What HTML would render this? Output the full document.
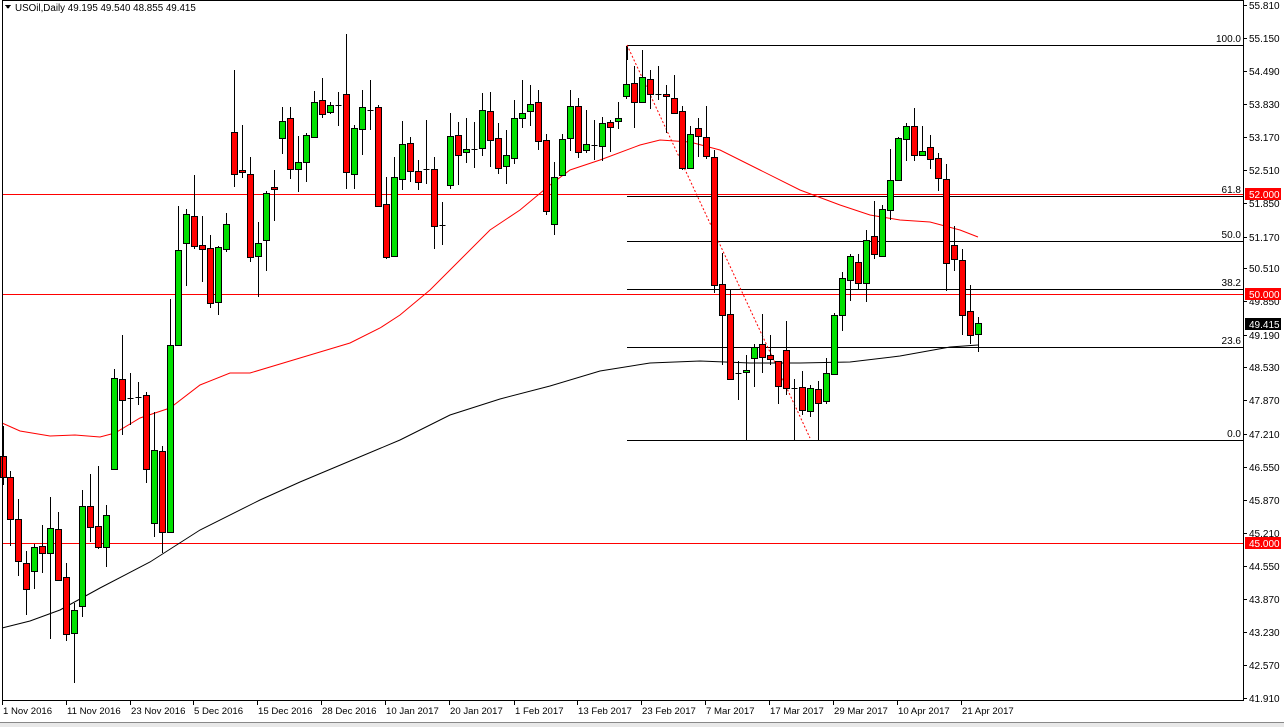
<!DOCTYPE html>
<html><head><meta charset="utf-8"><style>
html,body{margin:0;padding:0;background:#fff;width:1284px;height:727px;overflow:hidden}
svg{display:block;font-family:"Liberation Sans","DejaVu Sans",sans-serif}
</style></head><body>
<svg id="s" width="1284" height="727" xmlns="http://www.w3.org/2000/svg" shape-rendering="crispEdges">
<rect x="0" y="0" width="1284" height="727" fill="#fff"/>
<g id="g"></g>
</svg>
<script>
var NS="http://www.w3.org/2000/svg",G=document.getElementById('g');
function el(t,a,txt){var e=document.createElementNS(NS,t);for(var k in a)e.setAttribute(k,a[k]);if(txt!=null)e.textContent=txt;G.appendChild(e);return e;}
function line(x1,y1,x2,y2,c,w,extra){var a={x1:x1,y1:y1,x2:x2,y2:y2,stroke:c,'stroke-width':w||1};for(var k in extra)a[k]=extra[k];return el('line',a);}
[194.5,294.5,543.5].forEach(function(y){line(2,y,1243,y,'#f00',1);});
var fib=[[45,'100.0'],[196,'61.8'],[241,'50.0'],[289,'38.2'],[347,'23.6'],[440,'0.0']];
fib.forEach(function(f){line(627,f[0]+.5,1243,f[0]+.5,'#000',1);el('text',{x:1241,y:f[0]-3,'font-size':10,'text-anchor':'end',fill:'#000'},f[1]);});
line(627.5,45,627.5,60,'#000',1);
line(627,45,810,438,'#f00',1,{'stroke-dasharray':'2,2','shape-rendering':'auto'});
function poly(pts,c){el('polyline',{points:pts.map(function(p){return p.join(',')}).join(' '),fill:'none',stroke:c,'stroke-width':1,'shape-rendering':'auto'});}
poly([[2,423],[20,431],[50,436],[75,435],[100,437],[115,433],[140,418],[170,408],[200,385],[230,373],[250,373],[300,358],[350,343],[380,328],[400,315],[430,290],[460,260],[490,230],[520,210],[550,185],[570,170],[600,160],[640,145],[660,140],[690,142],[720,150],[760,170],[800,190],[840,205],[870,215],[900,220],[930,222],[960,230],[978,237]],'#f00');
poly([[2,628],[30,621],[60,610],[100,588],[150,562],[200,530],[260,500],[300,482],[350,461],[400,440],[450,415],[500,399],[550,386],[600,371],[650,363],[700,361],[750,363],[800,363],[850,362],[900,356],[950,347],[978,345]],'#000');
var P1=[[8,1012,1062,940,1080,'r'],[30,1062,1162,1048,1225,'r'],[55,1162,1262,1113,1296,'r'],[79,1265,1328,1238,1390,'r'],[103,1228,1286,1220,1327,'g'],[127,1226,1241,1176,1290,'r'],[151,1182,1243,1108,1447,'g'],[175,1184,1306,1145,1306,'r'],[199,1298,1435,1267,1452,'r'],[223,1377,1433,1360,1552,'g'],[247,1131,1368,1093,1393,'g'],[271,1131,1181,1054,1215,'r'],[295,1178,1228,1036,1232,'r'],[319,1153,1228,1128,1275,'g'],[343,827,1042,805,1046,'g'],[367,830,878,725,963,'r'],[391,875,875,815,937,'d'],[415,872,872,835,890,'d'],[439,867,1043,860,1077,'r'],[463,998,1171,908,1203,'g'],[487,1000,1193,988,1242,'r'],[511,748,1193,640,1193,'g'],[535,523,748,418,748,'g'],[559,437,505,425,609,'g'],[583,442,514,344,519,'r'],[607,511,520,441,598,'r'],[631,518,649,487,661,'r'],[655,516,647,513,676,'g'],[679,461,520,434,528,'g'],[703,242,342,96,372,'r'],[727,333,338,226,352,'r'],[751,342,540,302,550,'r'],[775,505,537,457,635,'g'],[799,387,499,382,572,'g'],[823,373,378,333,453,'r'],[847,216,257,182,294,'g'],[871,209,331,182,355,'r'],[895,314,331,251,384,'g'],[919,249,314,245,361,'g'],[943,171,255,145,255,'g'],[967,167,200,113,210,'r'],[991,177,195,170,200,'g']];
var P2=[[25,177,177,147,227,'d'],[49,153,338,10,377,'r'],[73,233,341,225,377,'g'],[97,183,236,143,298,'g'],[121,191,191,119,237,'d'],[145,183,419,178,421,'r'],[169,413,540,350,545,'r'],[193,350,537,302,540,'g'],[217,271,354,215,380,'g'],[241,268,335,254,360,'r'],[265,334,361,309,379,'r'],[289,330,330,213,365,'d'],[313,330,466,301,521,'r'],[337,463,463,409,510,'d'],[361,252,367,197,377,'g'],[385,249,296,218,367,'r'],[409,283,290,209,316,'g'],[433,282,282,218,327,'d'],[457,190,281,150,300,'g'],[481,192,262,147,325,'r'],[505,257,328,222,343,'r'],[529,297,323,237,365,'g'],[553,209,304,166,318,'g'],[577,197,209,119,232,'g'],[601,176,193,130,228,'g'],[625,171,264,143,286,'r'],[649,261,431,247,439,'r'],[673,348,461,313,486,'g'],[697,259,345,248,345,'g'],[721,181,257,143,287,'g'],[745,181,290,162,303,'r'],[769,271,286,189,291,'g'],[793,274,274,213,309,'d'],[817,221,276,207,312,'g'],[841,219,231,213,290,'r'],[865,209,217,171,235,'g'],[889,128,157,37,164,'g'],[913,126,170,86,232,'r'],[937,112,170,47,172,'g'],[961,117,152,96,187,'r'],[985,152,152,85,166,'d']];
var P3=[[19,153,157,130,245,'r'],[43,162,198,107,200,'r'],[67,192,328,181,333,'r'],[91,247,327,228,329,'g'],[115,233,252,209,302,'r'],[139,255,300,181,307,'r'],[163,302,606,286,625,'r'],[187,604,676,530,795,'r'],[211,675,828,617,831,'r'],[235,815,815,785,878,'d'],[259,808,813,772,975,'g'],[283,753,780,745,847,'g'],[307,746,777,675,815,'r'],[331,772,782,725,795,'r'],[355,787,845,785,888,'r'],[379,760,850,690,867,'r'],[403,850,850,829,975,'d'],[427,849,903,810,915,'r'],[451,851,906,843,920,'g'],[475,853,887,833,975,'r'],[499,814,880,779,888,'g'],[523,676,818,671,820,'g'],[547,589,678,575,716,'g'],[571,537,593,531,643,'g'],[595,550,602,532,614,'r'],[619,499,601,475,645,'g'],[643,490,533,406,543,'r'],[667,425,536,415,537,'g'],[691,356,428,283,451,'g'],[715,257,357,253,357,'g'],[739,227,259,221,310,'g'],[763,228,298,185,310,'r'],[787,288,296,228,296,'g'],[811,278,307,249,330,'r'],[835,304,352,292,382,'r'],[859,354,554,318,619,'r'],[883,511,545,465,572,'r'],[907,547,677,520,725,'r'],[931,668,725,606,745,'r'],[955,696,723,682,765,'g']];
function Y(z){return Math.round(30+z/2.375);}
function draw(P,off){P.forEach(function(c){var x=Math.round(off+c[0]/3)+0.5;var t=Y(c[1]),b=Y(c[2]),h=Y(c[3]),l=Y(c[4]);
line(x,h,x,l,'#000',1);
if(c[5]=='d'||b-t<1){line(x-3,t+.5,x+3,t+.5,'#000',1);}
else el('rect',{x:x-3,y:t+.5,width:6,height:b-t,fill:c[5]=='g'?'#00e000':'#f00',stroke:'#000','stroke-width':1});});}
draw(P1,0);draw(P2,330);draw(P3,660);
el('rect',{x:2.5,y:0.5,width:1241,height:700,fill:'none',stroke:'#000','stroke-width':1});
var pl=[[5,'55.810'],[38,'55.150'],[71,'54.490'],[104,'53.830'],[137,'53.170'],[170,'52.510'],[203,'51.850'],[237,'51.170'],[268,'50.510'],[301,'49.850'],[335,'49.190'],[367,'48.530'],[400,'47.870'],[434,'47.210'],[467,'46.550'],[500,'45.870'],[533,'45.210'],[566,'44.550'],[599,'43.870'],[632,'43.230'],[665,'42.570'],[698,'41.910']];
pl.forEach(function(p){line(1243,p[0]+.5,1247,p[0]+.5,'#000',1);el('text',{x:1249,y:p[0]+4,'font-size':10,fill:'#000'},p[1]);});
[[194,'52.000','#f00','#fff'],[294,'50.000','#f00','#fff'],[543,'45.000','#f00','#fff'],[324,'49.415','#000','#fff']].forEach(function(b){el('rect',{x:1245,y:b[0]-6,width:36,height:12,fill:b[2]});el('text',{x:1249,y:b[0]+4,'font-size':10,fill:b[3]},b[1]);});
var dl=[[2,'1 Nov 2016'],[66,'11 Nov 2016'],[130,'23 Nov 2016'],[193,'5 Dec 2016'],[257,'15 Dec 2016'],[321,'28 Dec 2016'],[385,'10 Jan 2017'],[449,'20 Jan 2017'],[514,'1 Feb 2017'],[577,'13 Feb 2017'],[641,'23 Feb 2017'],[705,'7 Mar 2017'],[769,'17 Mar 2017'],[833,'29 Mar 2017'],[897,'10 Apr 2017'],[961,'21 Apr 2017']];
dl.forEach(function(d){line(d[0]+.5,700,d[0]+.5,705,'#000',1);el('text',{x:d[0]+1,y:714,'font-size':9.6,fill:'#000'},d[1]);});
el('rect',{x:0,y:722,width:1284,height:5,fill:'#e8e8e8'});
line(0,722.5,1284,722.5,'#888',1);
el('path',{d:'M5 5 L11 5 L8 9 Z',fill:'#000'});
el('text',{x:15,y:11,'font-size':9.8,fill:'#000'},'USOil,Daily  49.195 49.540 48.855 49.415').setAttribute('xml:space','preserve');
</script>
</body></html>
